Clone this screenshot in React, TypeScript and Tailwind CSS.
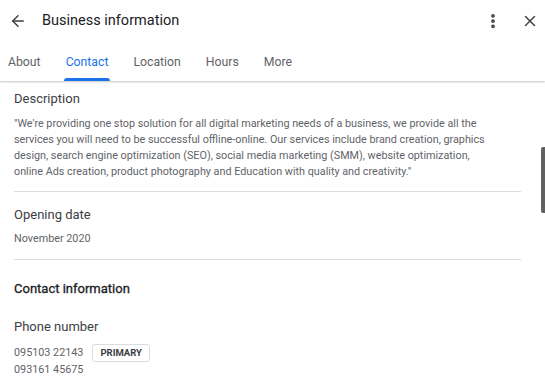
import { ArrowLeft, EllipsisVertical, X } from "lucide-react";

const tabs = ["About", "Contact", "Location", "Hours", "More"];

export default function App() {
  return (
    <div className="relative h-[385px] w-[545px] overflow-hidden bg-white font-['Roboto',sans-serif] text-[#202124]">
      <header className="relative z-10 shadow-[0_1px_2px_rgba(60,64,67,0.3)]">
        <div className="flex h-[42px] items-center pl-[9px] pr-[6px]">
          <ArrowLeft size={18} strokeWidth={2} className="text-[#3c4043]" />
          <h1 className="ml-[15px] text-[14.5px] leading-none">Business information</h1>
          <div className="ml-auto flex items-center gap-[19px]">
            <EllipsisVertical size={18} strokeWidth={3} className="text-[#3c4043]" />
            <X size={18} strokeWidth={2} className="text-[#3c4043]" />
          </div>
        </div>
        <nav className="flex h-[39px] items-stretch pl-[8px] pt-[2px] text-[12.25px]">
          {tabs.map((t) => (
            <div
              key={t}
              className={
                "relative mr-[25px] flex items-center " +
                (t === "Contact" ? "text-[#1a73e8]" : "text-[#5f6368]")
              }
            >
              {t}
              {t === "Contact" && (
                <span className="absolute bottom-0 left-[-2px] right-[-2px] h-[3px] rounded-t-[3px] bg-[#1a73e8]" />
              )}
            </div>
          ))}
        </nav>
      </header>

      <main className="pl-[14px] pr-[24px]">
        <section className="border-b border-[#dadce0] pb-[11px] pt-[9px]">
          <h2 className="text-[13px] leading-[18px] text-[#3c4043]">Description</h2>
          <p className="mt-[8px] max-w-[486px] text-[10.8px] leading-[16px] text-[#5f6368]">
            "We're providing one stop solution for all digital marketing needs of a business, we provide all the
            services you will need to be successful offline-online. Our services include brand creation, graphics
            design, search engine optimization (SEO), social media marketing (SMM), website optimization, online
            Ads creation, product photography and Education with quality and creativity."
          </p>
        </section>

        <section className="border-b border-[#dadce0] pb-[12px] pt-[14px]">
          <h2 className="text-[13px] leading-[18px] text-[#3c4043]">Opening date</h2>
          <p className="mt-[7px] text-[10.8px] leading-[16px] text-[#5f6368]">November 2020</p>
        </section>

        <section className="pt-[20px]">
          <h2 className="text-[13px] font-normal leading-[18px] text-[#202124] [-webkit-text-stroke:0.3px_#202124]">
            Contact information
          </h2>
          <h3 className="mt-[20px] text-[13px] leading-[18px] text-[#3c4043]">Phone number</h3>
          <div className="mt-[8px] flex items-center gap-[9px] text-[10.8px] leading-[18px] text-[#5f6368]">
            <span>095103 22143</span>
            <span className="rounded-[3px] border border-[#dadce0] px-[7px] text-[9.5px] font-bold leading-[16px] text-[#3c4043]">
              PRIMARY
            </span>
          </div>
          <p className="text-[10.8px] leading-[16px] text-[#5f6368]">093161 45675</p>
        </section>
      </main>

      <div className="absolute right-0 top-[147px] h-[66px] w-[4px] rounded-l-[2px] bg-[#616161]" />
    </div>
  );
}
